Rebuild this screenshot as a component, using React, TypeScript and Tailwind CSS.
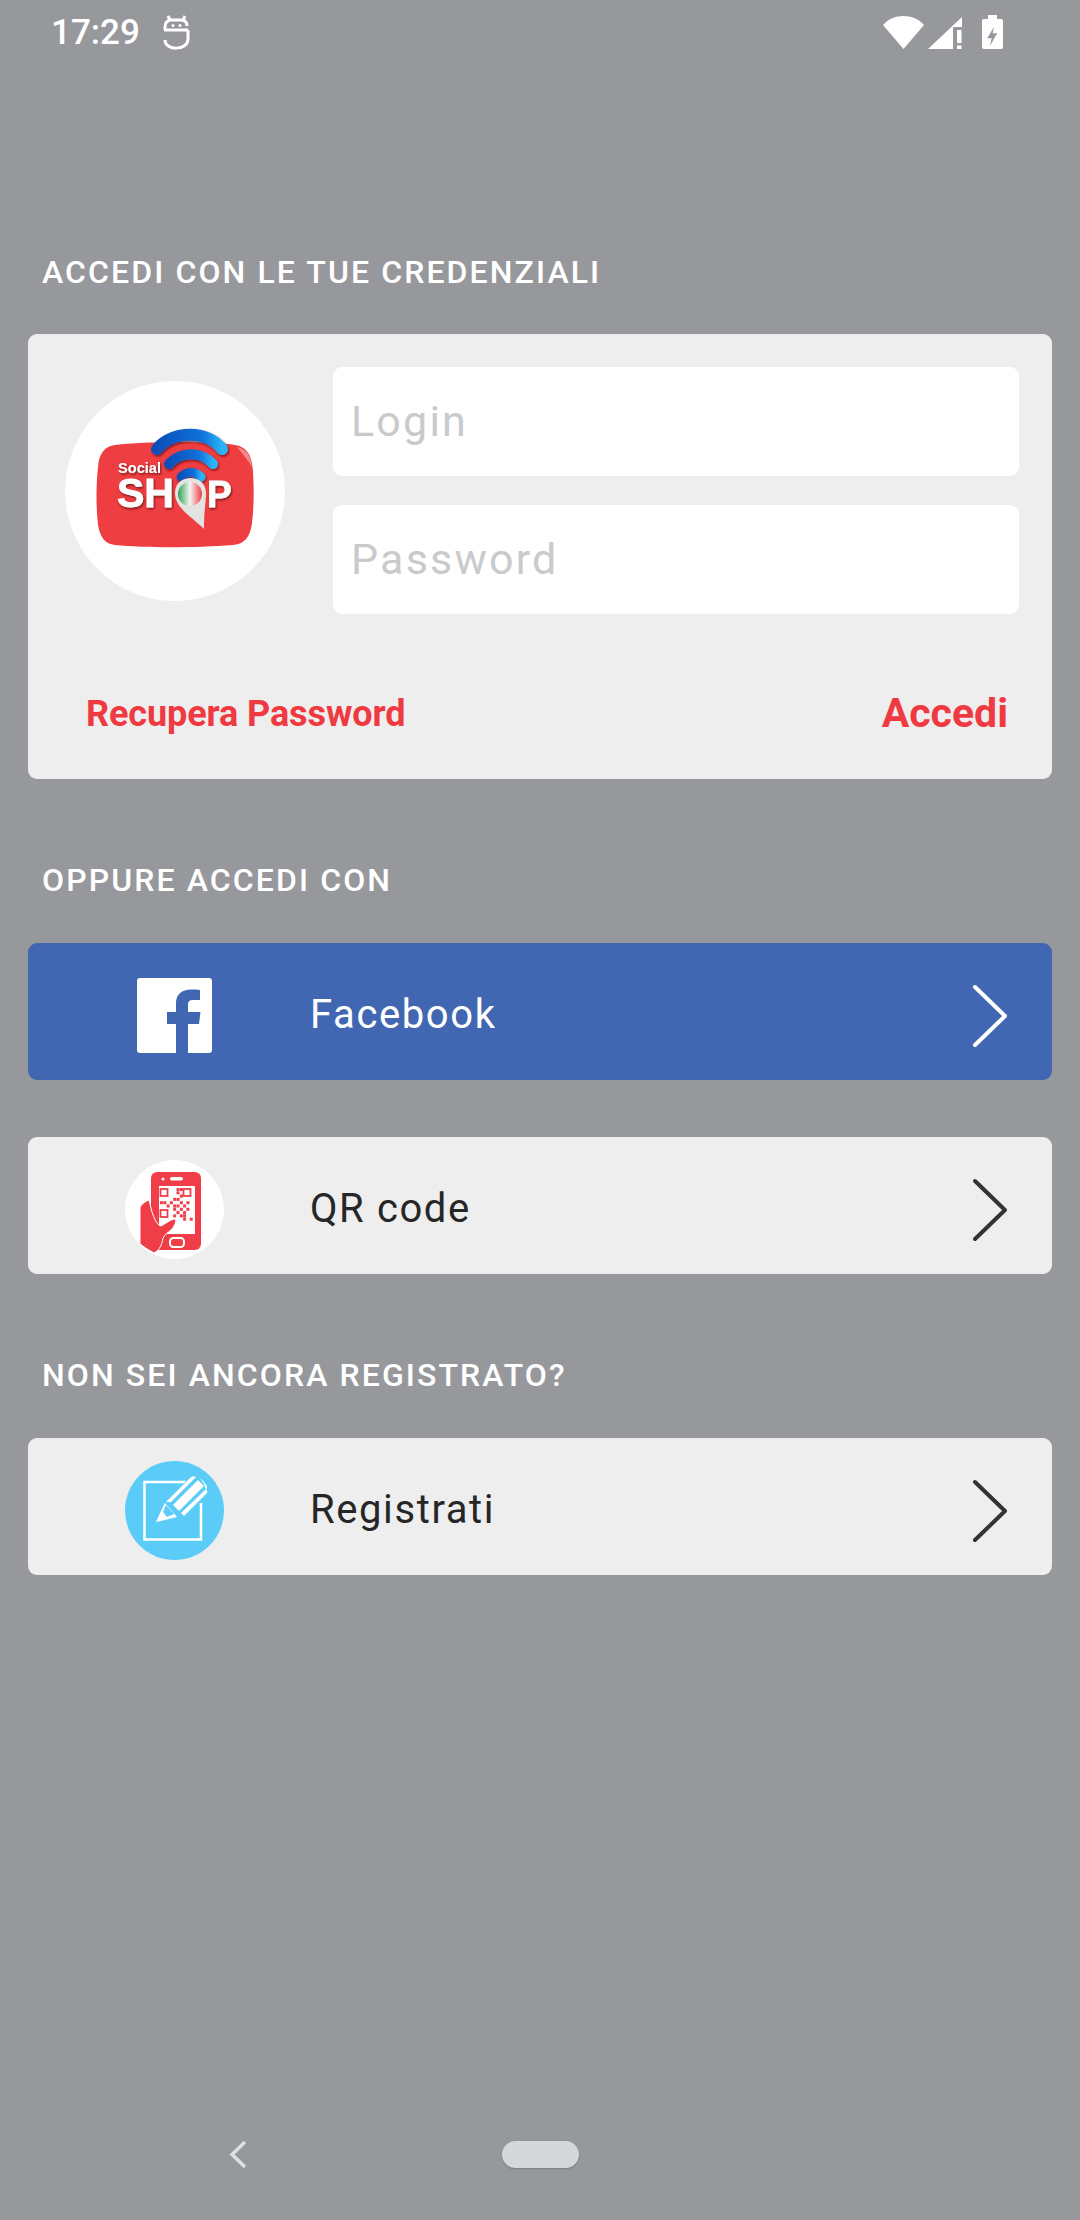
import React from 'react';

const ROBOTO = { fontFamily: 'Roboto, sans-serif' };

const Chevron: React.FC<{ color: string }> = ({ color }) => (
  <svg width="40" height="66" viewBox="0 0 40 66" fill="none">
    <path d="M5 4 L35 33 L5 62" stroke={color} strokeWidth="4" strokeLinecap="round" strokeLinejoin="round" />
  </svg>
);

const Logo = () => (
  <svg width="220" height="220" viewBox="0 0 220 220">
    <defs>
      <linearGradient id="wifi" x1="0" y1="0" x2="1" y2="0">
        <stop offset="0" stopColor="#0b4fb8" />
        <stop offset="0.7" stopColor="#1273dc" />
        <stop offset="1" stopColor="#2ab4f5" />
      </linearGradient>
      <linearGradient id="pin" x1="0" y1="0" x2="1" y2="0">
        <stop offset="0" stopColor="#2fa24f" />
        <stop offset="0.5" stopColor="#f4f4f4" />
        <stop offset="1" stopColor="#ee3e43" />
      </linearGradient>
      <filter id="drop" x="-20%" y="-20%" width="140%" height="140%">
        <feDropShadow dx="1" dy="1.500" stdDeviation="1" floodColor="#5a0c10" floodOpacity="0.8" />
      </filter>
    </defs>
    <path d="M50 64 C80 60 150 60 170 64 C183 66 187 76 188 90 C189 110 189 125 187 142 C185 158 178 163 168 164 C130 167 80 167 50 164 C40 163 35 156 33 144 C31 125 31 105 33 86 C34 72 40 65 50 64 Z" fill="#ef3e42" />
    <path d="M172 66 C182 68 186 76 187 86 C182 78 177 72 172 66 Z" fill="#f58a8c" />
    <g fill="none" strokeLinecap="round" filter="url(#drop)">
      <path d="M92 68 C108 49 142 49 157 68" stroke="url(#wifi)" strokeWidth="12" />
      <path d="M104 83 C116 70 136 70 148 83" stroke="url(#wifi)" strokeWidth="10" />
      <path d="M116 96 C122 90 130 90 136 96" stroke="url(#wifi)" strokeWidth="9" />
    </g>
    <g fill="#ffffff" filter="url(#drop)" style={{ fontFamily: '"Liberation Sans", sans-serif', fontWeight: 700 }}>
      <text x="53" y="92" fontSize="14.600">Social</text>
      <text x="52" y="126" fontSize="41" stroke="#ffffff" strokeWidth="0.800">SH</text>
      <text x="142" y="126" fontSize="37" stroke="#ffffff" strokeWidth="0.800">P</text>
    </g>
    <path d="M110 112 C110 92 141 92 141 112 C141 122 139 128 139 148 C130 138 110 128 110 112 Z" fill="#e3e3e1" />
    <circle cx="125" cy="113" r="12" fill="url(#pin)" />
  </svg>
);

const FacebookIcon = () => (
  <svg width="75" height="75" viewBox="0 0 75 75">
    <path d="M3 0 H72 A3 3 0 0 1 75 3 V72 A3 3 0 0 1 72 75 H51 V46 H62 L63.500 34 H51 V27 C51 23 53 22 56 22 H63 V12 C60 11.500 57 11.500 54 11.500 C45 11.500 39 16.500 39 25 V34 H30 V46 H39 V75 H3 A3 3 0 0 1 0 72 V3 A3 3 0 0 1 3 0 Z" fill="#ffffff" />
  </svg>
);

const QR_CELLS = [
  [0, 5], [0, 6], [1, 5], [2, 6], [3, 4], [3, 5], [4, 0], [4, 1], [4, 3], [4, 6], [4, 8],
  [5, 2], [5, 4], [5, 5], [5, 7], [6, 4], [6, 6], [6, 8], [7, 5], [7, 7], [8, 4], [8, 6], [8, 7], [9, 7], [9, 9],
];

const QrIcon = () => (
  <svg width="99" height="99" viewBox="0 0 99 99">
    <circle cx="49.500" cy="49.500" r="49.500" fill="#ffffff" />
    <rect x="26" y="12" width="50" height="78" rx="6" fill="#ef3e47" />
    <rect x="34" y="26" width="36" height="48" fill="#ffffff" />
    <circle cx="38" cy="19" r="1.500" fill="#ffffff" />
    <rect x="45" y="17" width="13" height="3.500" rx="1.750" fill="#ffffff" />
    <rect x="45" y="78" width="14" height="9" rx="3.500" fill="none" stroke="#ffffff" strokeWidth="2" />
    <g fill="none" stroke="#ef3e47" strokeWidth="1.800">
      <rect x="35.500" y="29" width="7" height="7" />
      <rect x="58.500" y="29" width="7" height="7" />
      <rect x="35.500" y="50" width="7" height="7" />
    </g>
    {QR_CELLS.map(([r, c]) => (
      <rect key={`${r}-${c}`} x={35 + c * 3.300} y={28 + r * 3.300} width="3" height="3" fill="#ef3e47" />
    ))}
    <path d="M15 48 C15 45 21 41 24 40 L27 52 C29 58 31 63 35 66 C40 65 45 59 50 59 C52 61 50 65 47 69 C43 73 40 74 38 78 C37 84 35 90 29 93 L22 89 L15 84 Z" fill="#ef3e47" stroke="#ffffff" strokeWidth="1" />
  </svg>
);

const RegisterIcon = () => (
  <svg width="99" height="99" viewBox="0 0 99 99">
    <circle cx="49.500" cy="49.500" r="49.500" fill="#5accf7" />
    <path d="M62 21 H19.500 V78.500 H76 V42" fill="none" stroke="#ffffff" strokeWidth="2.500" />
    <path d="M40 41 L66 15 C69 13 71 15 72 16 L62 26 L74 38 L50 61 L38 50 Z M66 24 L70 18 L81 27 L87 25 C86 29 84 31 80 33 L76 36 Z" fill="#5accf7" />
    <path d="M41 41 L65 17 Q68 14 71 16 L46 41 Z" fill="#ffffff" />
    <path d="M48 44 L73 19 L79 25 L54 50 Z" fill="#ffffff" />
    <path d="M75 17 Q79 20 81 24 Q83 26 81 29 L79 23 Z" fill="#ffffff" />
    <path d="M56 52 L81 28 Q83 31 82 32 L59 55 Z" fill="#ffffff" />
    <path d="M40 42 L52 56 L40 59 L31 61 L36 50 Z" fill="#ffffff" />
    <path d="M41 44 L49 53 L42 56 L38 51 Z" fill="#5accf7" />
  </svg>
);

const Row: React.FC<{
  label: string;
  icon: React.ReactNode;
  blue?: boolean;
  className?: string;
}> = ({ label, icon, blue, className }) => (
  <div
    className={`mx-7 h-[137px] rounded-[9px] flex items-center ${blue ? 'bg-[#4267b2] text-white' : 'bg-[#eeeeee] text-[#262626]'} ${className || ''}`}
  >
    <div className="w-[282px] flex justify-center shrink-0 pl-[10px] pt-2">{icon}</div>
    <span className="flex-1 text-[40px] tracking-[1.6px] pt-[7px]">{label}</span>
    <div className="pr-[42px] pt-2">
      <Chevron color={blue ? '#ffffff' : '#333333'} />
    </div>
  </div>
);

const Heading: React.FC<{ text: string; className?: string }> = ({ text, className }) => (
  <div className={`pl-[42px] h-10 flex items-center text-[32px] font-medium tracking-[2.1px] text-white ${className || ''}`}>
    {text}
  </div>
);

export default function App() {
  return (
    <div className="relative w-[1080px] h-[2220px] overflow-hidden bg-[#97989c] flex flex-col" style={ROBOTO}>
      {/* status bar */}
      <div className="h-[64px] flex items-center justify-between pl-[51px] pr-[75px] text-white">
        <div className="flex items-center">
          <span className="w-[112px] text-[35px] font-medium pt-[2px]">17:29</span>
          <svg className="mt-1" width="28" height="40" viewBox="13 9 28 40" fill="none" stroke="#ffffff" strokeWidth="3">
            <path d="M15 25 V22 Q15 15 22 15 H31 Q37 15 37 21" />
            <path d="M14 25 H38" />
            <path d="M38 25 V34 C38 46 15 46 15 35" />
            <path d="M18 11 L20 15 M35 11 L33 15" />
            <circle cx="23" cy="20.500" r="1.500" fill="#ffffff" stroke="none" />
            <circle cx="30" cy="20.500" r="1.500" fill="#ffffff" stroke="none" />
          </svg>
        </div>
        <svg width="122" height="36" viewBox="0 0 122 36" fill="#ffffff">
          <path d="M0 11 C10 -1 31 -1 41 11 L20.500 35 Z" />
          <path d="M45 35 L79 3 V13 H70 V35 Z" />
          <rect x="74" y="16" width="4.500" height="13" />
          <rect x="74" y="31.500" width="4.500" height="3.500" />
          <path
            d="M105 1 H114 V5 H118 Q120 5 120 7 V33 Q120 35 118 35 H101 Q99 35 99 33 V7 Q99 5 101 5 H105 Z M111 12.700 L104.300 24.300 H108.700 L107 31.700 L114.300 19.300 H109.700 Z"
            fillRule="evenodd"
          />
        </svg>
      </div>

      <Heading text="ACCEDI CON LE TUE CREDENZIALI" className="mt-[188px]" />

      {/* login card */}
      <div className="mx-7 mt-[42px] h-[445px] rounded-[9px] bg-[#eeeeee] flex flex-col">
        <div className="flex pt-[33px]">
          <div className="w-[305px] shrink-0 pl-[37px] pt-[14px]">
            <div className="w-[220px] h-[220px] rounded-full bg-white overflow-hidden">
              <Logo />
            </div>
          </div>
          <div className="flex-1 flex flex-col gap-[29px] pr-[33px]">
            <div className="h-[109px] rounded-[9px] bg-white flex items-center pl-[18px] text-[43px] tracking-[2.200px] text-[#c9cacc]">
              Login
            </div>
            <div className="h-[109px] rounded-[9px] bg-white flex items-center pl-[18px] text-[43px] tracking-[2.200px] text-[#c9cacc]">
              Password
            </div>
          </div>
        </div>
        <div className="flex items-center justify-between pl-[58px] pr-[44px] mt-[69px] font-bold text-[#ef3a42]">
          <span className="text-[36px] tracking-[-0.1px]">Recupera Password</span>
          <span className="text-[41px]">Accedi</span>
        </div>
      </div>

      <Heading text="OPPURE ACCEDI CON" className="mt-[81px]" />
      <Row label="Facebook" icon={<FacebookIcon />} blue className="mt-[43px]" />
      <Row label="QR code" icon={<QrIcon />} className="mt-[57px]" />
      <Heading text="NON SEI ANCORA REGISTRATO?" className="mt-[81px]" />
      <Row label="Registrati" icon={<RegisterIcon />} className="mt-[43px]" />

      {/* nav bar */}
      <div className="mt-auto h-[94px] relative flex justify-center">
        <svg className="absolute left-[228px] top-[13px]" width="20" height="30" viewBox="0 0 20 30" fill="none">
          <path d="M17 3 L4 15.500 L17 28" stroke="#dfe0e2" strokeWidth="3.500" />
        </svg>
        <div className="mt-[15px] w-[77px] h-[27px] rounded-full bg-[#d6d7d9] shadow-[0_1px_2px_rgba(0,0,0,0.2)]" />
      </div>
    </div>
  );
}
